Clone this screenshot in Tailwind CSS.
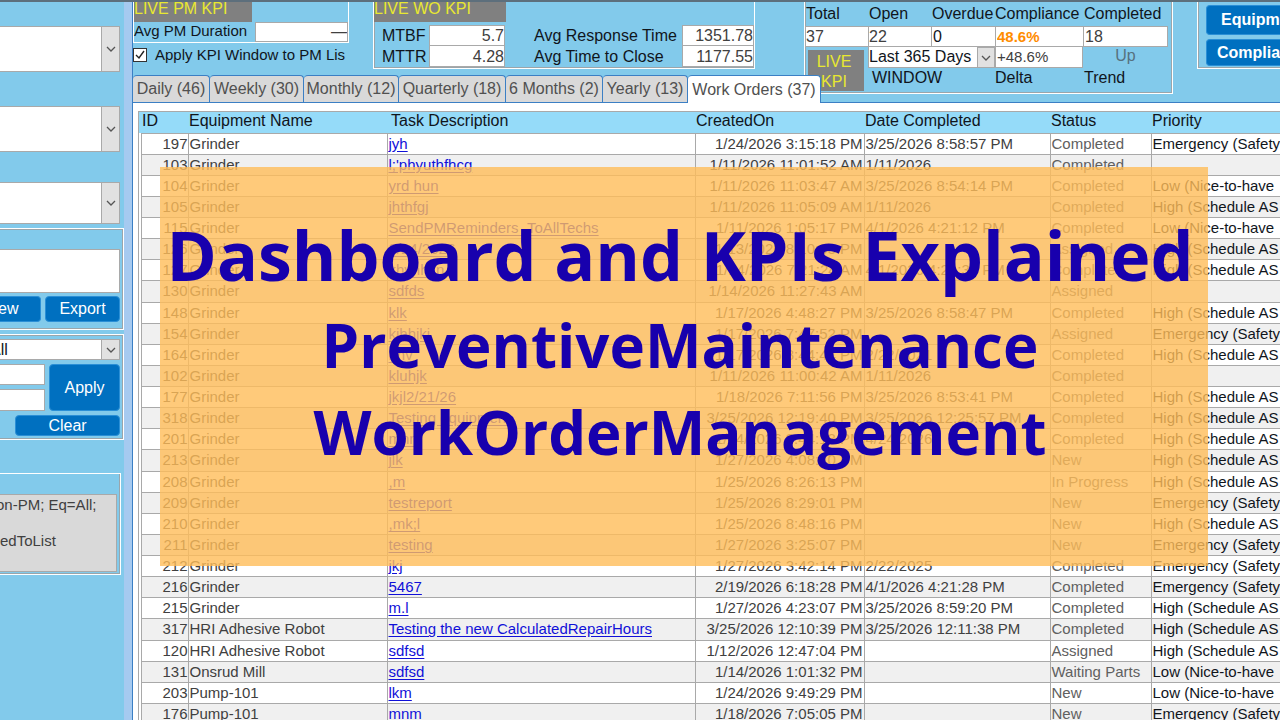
<!DOCTYPE html>
<html lang="en">

<head>
    <meta charset="UTF-8">
    <meta name="viewport" content="width=device-width, initial-scale=1.0">
    <title>Dashboard and KPIs Explained</title>
    <script src="https://cdn.jsdelivr.net/npm/@tailwindcss/browser@4"></script>
</head>

<body class="relative flex h-screen overflow-hidden bg-[#82caeb] font-['Liberation_Sans',Arial,sans-serif] text-base leading-5 text-[#10151c]">

    <!-- top window edge -->
    <div class="absolute inset-x-0 top-0 z-20 h-0.5 bg-[#5d6f7c]"></div>

    <!-- filters -->
    <aside class="flex w-[132px] shrink-0 flex-col border-r-8 border-[#a6caf0] pt-[26px]">
        <button type="button" aria-label="Equipment" class="mr-1 flex h-[46px] border border-l-0 border-[#a9a9a9] bg-white">
            <span class="ml-auto flex h-full w-[18px] items-center justify-center border-l border-[#a9a9a9] bg-[#e1e1e1]">
                <svg class="w-2.5" viewBox="0 0 10 6" fill="none" stroke="#555" stroke-width="1.3"><path d="M1 1l4 4 4-4" /></svg>
            </span>
        </button>
        <button type="button" aria-label="Technician" class="mt-[34px] mr-1 flex h-[46px] border border-l-0 border-[#a9a9a9] bg-white">
            <span class="ml-auto flex h-full w-[18px] items-center justify-center border-l border-[#a9a9a9] bg-[#e1e1e1]">
                <svg class="w-2.5" viewBox="0 0 10 6" fill="none" stroke="#555" stroke-width="1.3"><path d="M1 1l4 4 4-4" /></svg>
            </span>
        </button>
        <button type="button" aria-label="Status" class="mt-[30px] mr-1 flex h-[42px] border border-l-0 border-[#a9a9a9] bg-white">
            <span class="ml-auto flex h-full w-[18px] items-center justify-center border-l border-[#a9a9a9] bg-[#e1e1e1]">
                <svg class="w-2.5" viewBox="0 0 10 6" fill="none" stroke="#555" stroke-width="1.3"><path d="M1 1l4 4 4-4" /></svg>
            </span>
        </button>

        <section class="mt-1 h-[102px] border border-l-0 border-white pt-5 pr-[3px] shadow-[inset_-1px_-1px_#9aa5ab,inset_0_1px_#9aa5ab]">
            <textarea aria-label="Search" class="block h-11 w-full resize-none border border-l-0 border-[#a9a9a9] bg-white"></textarea>
            <div class="mt-[3px] flex gap-1">
                <button type="button" class="h-[26px] w-[41px] rounded-r-sm border border-l-0 border-[#2b8fd6] bg-[#0070c0] text-left -indent-0.5 text-white">ew</button>
                <button type="button" class="h-[26px] flex-1 rounded-sm border border-[#2b8fd6] bg-[#0070c0] text-white">Export</button>
            </div>
        </section>

        <section class="mt-1 h-[106px] border border-l-0 border-white pt-1 pr-[3px] shadow-[inset_-1px_-1px_#9aa5ab,inset_0_1px_#9aa5ab]">
            <button type="button" class="flex h-[21px] w-full border border-l-0 border-[#a9a9a9] bg-white leading-[19px]">
                <span class="-ml-2.5">All</span>
                <span class="ml-auto flex h-full w-[18px] items-center justify-center border-l border-[#a9a9a9] bg-[#e1e1e1]">
                    <svg class="w-2.5" viewBox="0 0 10 6" fill="none" stroke="#555" stroke-width="1.3"><path d="M1 1l4 4 4-4" /></svg>
                </span>
            </button>
            <div class="mt-1 flex gap-1">
                <div class="flex w-[45px] flex-col gap-1">
                    <input type="text" aria-label="From" class="h-[21px] w-full border border-l-0 border-[#a9a9a9] bg-white">
                    <input type="text" aria-label="To" class="h-[22px] w-full border border-l-0 border-[#a9a9a9] bg-white">
                </div>
                <button type="button" class="flex-1 rounded-sm border border-[#2b8fd6] bg-[#0070c0] text-white">Apply</button>
            </div>
            <button type="button" class="mt-1 ml-[15px] block h-[21px] w-[105px] rounded-sm border border-[#2b8fd6] bg-[#0070c0] leading-[18px] text-white">Clear</button>
        </section>

        <section class="mt-[33px] mr-[3px] h-[102px] border border-l-0 border-white pt-5 pr-[3px] shadow-[inset_-1px_-1px_#9aa5ab]">
            <div class="h-[78px] border border-l-0 border-[#a9a9a9] bg-[#d9d9d9] pt-px -indent-1 text-[15px] leading-[18px] whitespace-pre-line text-[#404040]">on-PM; Eq=All;

                edToList</div>
        </section>
    </aside>

    <main class="flex min-w-0 flex-1 flex-col border-l border-[#3b7fc4]">

        <header class="flex h-[75px] shrink-0 items-start">
            <!-- PM KPI -->
            <section class="w-[216px] shrink-0">
                <div class="border border-t-0 border-white">
                    <h2 class="h-[22px] w-[118px] bg-[#808080] leading-[18px] text-[#e8e830]">LIVE PM KPI</h2>
                    <div class="flex">
                        <label for="pmDuration" class="w-[121px] shrink-0 text-[15px] leading-[18px] whitespace-nowrap">Avg PM Duration</label>
                        <input id="pmDuration" type="text" value="—" class="h-5 min-w-0 flex-1 border border-[#a9a9a9] bg-white text-right text-[#404040]">
                    </div>
                </div>
                <div class="mt-0.5 flex items-center whitespace-nowrap">
                    <input id="applyWindow" type="checkbox" checked class="h-3.5 w-3.5 shrink-0 appearance-none border border-[#333] bg-white">
                    <svg class="pointer-events-none -ml-3 h-2.5 w-2.5 shrink-0" viewBox="0 0 10 10" fill="none" stroke="#222" stroke-width="1.4"><path d="M1 5l3 3 5-7" /></svg>
                    <label for="applyWindow" class="ml-2.5 text-[15px]">Apply KPI Window to PM Lis</label>
                </div>
            </section>

            <!-- WO KPI -->
            <section class="ml-6 w-[382px] shrink-0 border border-t-0 border-white pb-px shadow-[inset_1px_-1px_#9aa5ab]">
                <h2 class="h-[22px] w-[132px] bg-[#808080] leading-[18px] text-[#e8e830]">LIVE WO KPI</h2>
                <div class="mt-[3px] grid grid-cols-[47px_76px_29px_148px_1fr] grid-rows-[21px_21px] pl-2 leading-[21px]">
                    <label for="mtbf">MTBF</label>
                    <input id="mtbf" type="text" value="5.7" class="min-w-0 border border-[#a9a9a9] bg-white text-right text-[#404040]">
                    <label for="response" class="col-start-4">Avg Response Time</label>
                    <input id="response" type="text" value="1351.78" class="min-w-0 border border-[#a9a9a9] bg-white text-right text-[#404040]">
                    <label for="mttr">MTTR</label>
                    <input id="mttr" type="text" value="4.28" class="min-w-0 border border-t-0 border-[#a9a9a9] bg-white text-right text-[#404040]">
                    <label for="closeTime" class="col-start-4">Avg Time to Close</label>
                    <input id="closeTime" type="text" value="1177.55" class="min-w-0 border border-t-0 border-[#a9a9a9] bg-white text-right text-[#404040]">
                </div>
            </section>

            <!-- overall KPI -->
            <section class="ml-[49px] h-[94px] w-[369px] shrink-0 border border-t-0 border-white pt-1 shadow-[inset_1px_0_#9aa5ab,inset_-1px_-1px_#9aa5ab]">
                <div class="grid grid-cols-[63px_63px_64px_88px_85px] grid-rows-[22px_21px_21px_20px]">
                    <label for="total" class="pl-px">Total</label>
                    <label for="open" class="pl-px">Open</label>
                    <label for="overdue" class="pl-px">Overdue</label>
                    <label for="compliance">Compliance</label>
                    <label for="completed" class="pl-px">Completed</label>
                    <input id="total" type="text" value="37" class="min-w-0 border border-r-0 border-[#a9a9a9] bg-white text-[#404040]">
                    <input id="open" type="text" value="22" class="min-w-0 border border-r-0 border-[#a9a9a9] bg-white text-[#404040]">
                    <input id="overdue" type="text" value="0" class="min-w-0 border border-r-0 border-[#a9a9a9] bg-white pl-px">
                    <input id="compliance" type="text" value="48.6%" class="min-w-0 border border-r-0 border-[#a9a9a9] bg-white pl-px text-[15px] font-bold text-[#ff8c00]">
                    <input id="completed" type="text" value="18" class="min-w-0 border border-[#a9a9a9] bg-white pl-px text-[#404040]">
                    <h2 class="row-span-2 mt-[3px] ml-[3px] h-[41px] w-14 bg-[#808080] pt-0.5 pr-1 text-center text-[#e8e830]">LIVE KPI</h2>
                    <div class="relative col-span-2">
                        <select id="window" class="h-full w-full appearance-none border border-t-0 border-r-0 border-[#a9a9a9] bg-white leading-5">
                            <option>Last 365 Days</option>
                        </select>
                        <span class="pointer-events-none absolute inset-y-0 right-0 flex w-[18px] items-center justify-center border border-[#a9a9a9] bg-[#e1e1e1]">
                            <svg class="w-2.5" viewBox="0 0 10 6" fill="none" stroke="#555" stroke-width="1.3"><path d="M1 1l4 4 4-4" /></svg>
                        </span>
                    </div>
                    <input id="delta" type="text" value="+48.6%" class="min-w-0 border border-t-0 border-[#a9a9a9] bg-white pl-px text-[15px] text-[#404040]">
                    <span class="text-center leading-[18px] text-[#56717f]">Up</span>
                    <label for="window" class="col-span-2 pl-1">WINDOW</label>
                    <label for="delta">Delta</label>
                    <span class="pl-px">Trend</span>
                </div>
            </section>

            <!-- report buttons -->
            <nav class="ml-6 flex h-[69px] min-w-0 flex-1 flex-col gap-1 overflow-hidden border border-t-0 border-r-0 border-white pt-[5px] pl-2 shadow-[inset_1px_-1px_#9aa5ab]">
                <button type="button" class="h-[30px] rounded-l-sm border border-r-0 border-[#2b8fd6] bg-[#0070c0] pl-3.5 text-left font-bold text-white">Equipment</button>
                <button type="button" class="h-[27px] rounded-l-sm border border-r-0 border-[#2b8fd6] bg-[#0070c0] pl-2.5 text-left font-bold text-white">Compliance</button>
            </nav>
        </header>

        <!-- tabs -->
        <div role="tablist" class="relative z-10 grid h-[27px] shrink-0 grid-cols-[77px_94px_95px_107px_97px_85px_133px] text-[#505050]">
            <button role="tab" class="rounded-t border border-b-0 border-l-0 border-[#3b7fc4] bg-[#d9d9d9] whitespace-nowrap">Daily (46)</button>
            <button role="tab" class="rounded-t border border-b-0 border-l-0 border-[#3b7fc4] bg-[#d9d9d9] whitespace-nowrap">Weekly (30)</button>
            <button role="tab" class="rounded-t border border-b-0 border-l-0 border-[#3b7fc4] bg-[#d9d9d9] whitespace-nowrap">Monthly (12)</button>
            <button role="tab" class="rounded-t border border-b-0 border-l-0 border-[#3b7fc4] bg-[#d9d9d9] whitespace-nowrap">Quarterly (18)</button>
            <button role="tab" class="rounded-t border border-b-0 border-l-0 border-[#3b7fc4] bg-[#d9d9d9] whitespace-nowrap">6 Months (2)</button>
            <button role="tab" class="rounded-t border border-b-0 border-l-0 border-[#3b7fc4] bg-[#d9d9d9] whitespace-nowrap">Yearly (13)</button>
            <button role="tab" aria-selected="true" class="-mb-px rounded-t border border-b-0 border-l-0 border-[#3b7fc4] bg-white whitespace-nowrap">Work Orders (37)</button>
        </div>

        <!-- work orders -->
        <div class="min-h-0 flex-1 overflow-hidden border-t border-[#3b7fc4] bg-white pt-2 pl-[5px]">
            <div class="border-t border-l border-[#a9a9a9]">
                <table class="h-[613px] w-full table-fixed border-collapse whitespace-nowrap">
                    <colgroup>
                        <col class="w-[2px]">
                        <col class="w-[47px]">
                        <col class="w-[199px]">
                        <col class="w-[308px]">
                        <col class="w-[169px]">
                        <col class="w-[186px]">
                        <col class="w-[101px]">
                        <col>
                    </colgroup>
                    <thead>
                        <tr class="h-[21px] bg-[#95dbf9] text-left leading-[18px]">
                            <td class="p-0"></td>
                            <th class="p-0 pl-px align-top font-normal">ID</th>
                            <th class="p-0 pl-px align-top font-normal">Equipment Name</th>
                            <th class="p-0 pl-1 align-top font-normal">Task Description</th>
                            <th class="p-0 pl-px align-top font-normal">CreatedOn</th>
                            <th class="p-0 pl-px align-top font-normal">Date Completed</th>
                            <th class="p-0 pl-px align-top font-normal">Status</th>
                            <th class="p-0 pl-px align-top font-normal">Priority</th>
                        </tr>
                    </thead>
                    <tbody id="orders" class="text-[15px] leading-[18px] text-[#404040]"></tbody>
                </table>
            </div>
        </div>
    </main>

    <!-- title card -->
    <div class="absolute top-[167px] right-[72px] left-40 z-30 h-[399px] bg-[#ffbd59]/80 pt-11 pr-2 text-center font-['Open_Sans',sans-serif] font-bold whitespace-nowrap text-[#1800ad]">
        <h1 class="mb-1 text-[68px] leading-[87px]">Dashboard and KPIs Explained</h1>
        <p class="text-[60px] leading-[87px]">PreventiveMaintenance</p>
        <p class="text-[60px] leading-[87px]">WorkOrderManagement</p>
    </div>

    <script>
        const E = 'Emergency (Safety', H = 'High (Schedule AS', L = 'Low (Nice-to-have';
        const orders = [
            [197, 'Grinder', 'jyh', '1/24/2026 3:15:18 PM', '3/25/2026 8:58:57 PM', 'Completed', E],
            [103, 'Grinder', "l;'phyuthfhcg", '1/11/2026 11:01:52 AM', '1/11/2026', 'Completed', ''],
            [104, 'Grinder', 'yrd hun', '1/11/2026 11:03:47 AM', '3/25/2026 8:54:14 PM', 'Completed', L],
            [105, 'Grinder', 'jhthfgj', '1/11/2026 11:05:09 AM', '1/11/2026', 'Completed', H],
            [115, 'Grinder', 'SendPMReminders_ToAllTechs', '1/11/2026 1:05:17 PM', '4/1/2026 4:21:12 PM', 'Completed', L],
            [126, 'Grinder', '2/24/2026', '1/13/2026 8:10:03 PM', '', 'Assigned', H],
            [127, 'Grinder', 'khvnhkn', '1/14/2026 7:21:24 AM', '4/1/2026 4:21:37 PM', 'Completed', H],
            [130, 'Grinder', 'sdfds', '1/14/2026 11:27:43 AM', '', 'Assigned', ''],
            [148, 'Grinder', 'klk', '1/17/2026 4:48:27 PM', '3/25/2026 8:58:47 PM', 'Completed', H],
            [154, 'Grinder', 'kjhhjkj', '1/17/2026 7:47:52 PM', '', 'Assigned', E],
            [164, 'Grinder', 'hhv', '1/17/2026 8:44:44 PM', '2/22/2021', 'Completed', H],
            [102, 'Grinder', 'kluhjk', '1/11/2026 11:00:42 AM', '1/11/2026', 'Completed', ''],
            [177, 'Grinder', 'jkjl2/21/26', '1/18/2026 7:11:56 PM', '3/25/2026 8:53:41 PM', 'Completed', H],
            [318, 'Grinder', 'Testing equipment', '3/25/2026 12:19:40 PM', '3/25/2026 12:25:57 PM', 'Completed', H],
            [201, 'Grinder', 'mnn', '1/24/2026 9:44:13 PM', '4/24/2026', 'Completed', H],
            [213, 'Grinder', 'jlk', '1/27/2026 4:08:40 PM', '', 'New', H],
            [208, 'Grinder', ',m', '1/25/2026 8:26:13 PM', '', 'In Progress', H],
            [209, 'Grinder', 'testreport', '1/25/2026 8:29:01 PM', '', 'New', E],
            [210, 'Grinder', ',mk;l', '1/25/2026 8:48:16 PM', '', 'New', H],
            [211, 'Grinder', 'testing', '1/27/2026 3:25:07 PM', '', 'New', E],
            [212, 'Grinder', 'jkj', '1/27/2026 3:42:14 PM', '2/22/2025', 'Completed', E],
            [216, 'Grinder', '5467', '2/19/2026 6:18:28 PM', '4/1/2026 4:21:28 PM', 'Completed', E],
            [215, 'Grinder', 'm.l', '1/27/2026 4:23:07 PM', '3/25/2026 8:59:20 PM', 'Completed', H],
            [317, 'HRI Adhesive Robot', 'Testing the new CalculatedRepairHours', '3/25/2026 12:10:39 PM', '3/25/2026 12:11:38 PM', 'Completed', H],
            [120, 'HRI Adhesive Robot', 'sdfsd', '1/12/2026 12:47:04 PM', '', 'Assigned', H],
            [131, 'Onsrud Mill', 'sdfsd', '1/14/2026 1:01:32 PM', '', 'Waiting Parts', L],
            [203, 'Pump-101', 'lkm', '1/24/2026 9:49:29 PM', '', 'New', L],
            [176, 'Pump-101', 'mnm', '1/18/2026 7:05:05 PM', '', 'New', E],
        ];

        document.getElementById('orders').innerHTML = orders.map(([id, name, task, created, done, status, priority]) => `
            <tr class="even:bg-[#f0f0f0]">
                <td class="bg-white p-0"></td>
                <td class="border border-[#a9a9a9] p-0 text-right">${id}</td>
                <td class="border border-[#a9a9a9] p-0 pl-px">${name}</td>
                <td class="border border-[#a9a9a9] p-0 pl-px"><a href="#" class="text-[#1010d8] underline underline-offset-2">${task}</a></td>
                <td class="border border-[#a9a9a9] p-0 pr-px text-right">${created}</td>
                <td class="border border-[#a9a9a9] p-0 pl-px">${done}</td>
                <td class="border border-[#a9a9a9] p-0 pl-px text-[#606060]">${status}</td>
                <td class="overflow-hidden border border-r-0 border-[#a9a9a9] p-0 pl-px text-[#10151c]">${priority}</td>
            </tr>`).join('');
    </script>
</body>

</html>
